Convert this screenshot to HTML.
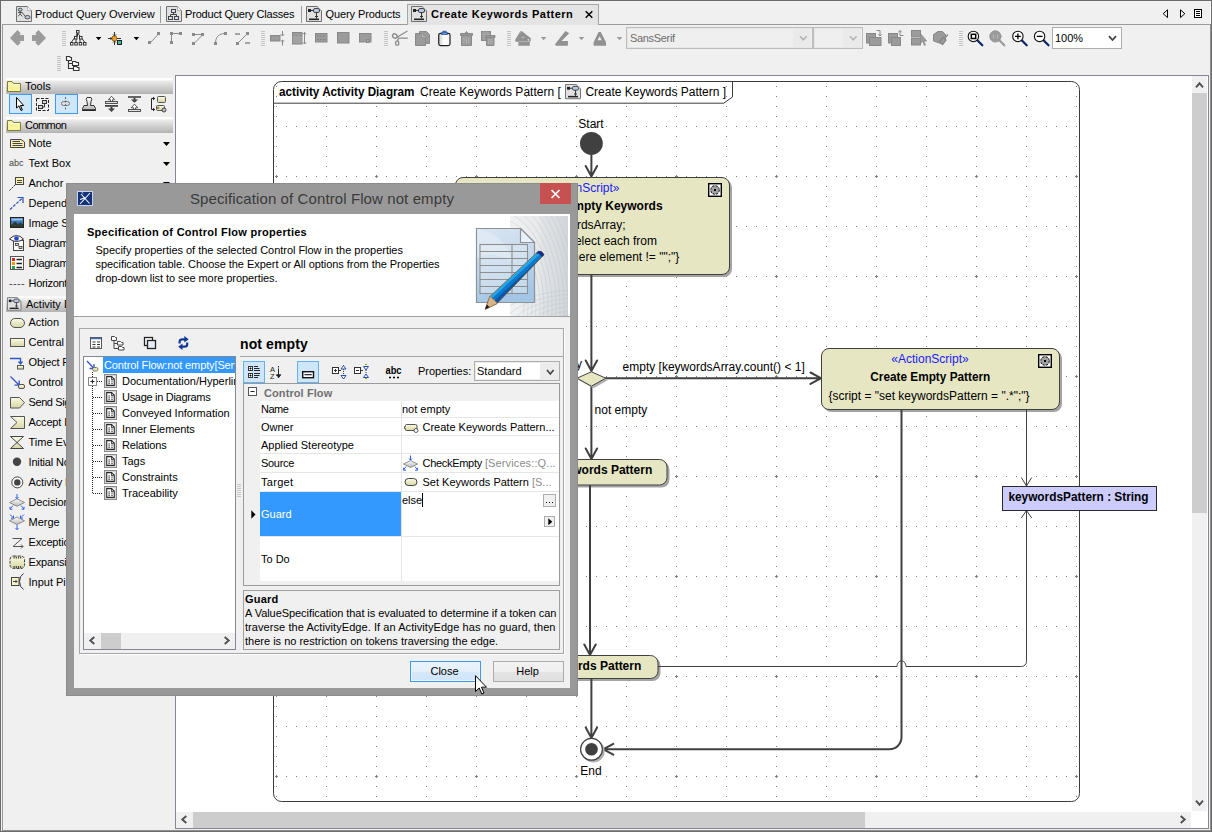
<!DOCTYPE html>
<html lang="en">
<head>
<meta charset="utf-8">
<title>Create Keywords Pattern</title>
<style>
*{box-sizing:border-box;margin:0;padding:0}
html,body{width:1212px;height:832px;overflow:hidden;background:#f0f0f0}
body{position:relative;font-family:"Liberation Sans",sans-serif;font-size:11px;color:#000;line-height:14px}
.a{position:absolute}
.t{position:absolute;white-space:nowrap;line-height:14px;height:14px}
.b{font-weight:bold;letter-spacing:.45px}
svg{position:absolute;overflow:visible}
.grip{position:absolute;width:4px;height:16px;background:repeating-linear-gradient(to bottom,#c4c4c4 0,#c4c4c4 1px,transparent 1px,transparent 2px)}
.dd{position:absolute;width:0;height:0;border-left:3.5px solid transparent;border-right:3.5px solid transparent;border-top:4px solid #000}
.ddg{border-top-color:#9a9a9a}
.ph{position:absolute;left:6px;width:167px;height:16px;background:linear-gradient(to bottom,#fff 0,#fff 10%,#ebebeb 19%,#dcdcdc 40%,#cacaca 66%,#b3b3b3 100%)}
.pi{position:absolute;left:28.500px;white-space:nowrap;line-height:14px}
.tb{position:absolute;width:23px;height:20px;background:#cde6f9;border:1px solid #3d99f5}
</style>
</head>
<body>
<!-- window edge -->
<div class="a" style="left:0;top:0;width:1212px;height:1px;background:#6c6c6c"></div>
<div class="a" style="left:0;top:0;width:1px;height:832px;background:#6c6c6c"></div>
<div class="a" style="left:1211px;top:0;width:1px;height:832px;background:#6c6c6c"></div>
<div class="a" style="left:1210px;top:24px;width:1px;height:808px;background:#8e8e8e"></div>
<div class="a" style="left:1210px;top:1px;width:1px;height:23px;background:#fafafa"></div>
<div class="a" style="left:0;top:831px;width:1212px;height:1px;background:#6c6c6c"></div>
<div class="a" style="left:2px;top:830px;width:1209px;height:1px;background:#8e8e8e"></div>
<div class="a" style="left:2px;top:24px;width:1px;height:806px;background:#9a9a9a"></div>
<!-- tab bar -->
<div class="a" style="left:2px;top:24px;width:405px;height:1px;background:#9a9a9a"></div>
<div class="a" style="left:598px;top:24px;width:612px;height:1px;background:#9a9a9a"></div>
<div class="a" style="left:407px;top:4px;width:192px;height:21px;background:#e4e4e4;border:1px solid #a5a5a5;border-bottom:none"></div>
<div class="a" style="left:160px;top:6px;width:1px;height:17px;background:#9a9a9a"></div>
<div class="a" style="left:301px;top:6px;width:1px;height:17px;background:#9a9a9a"></div>
<svg width="0" height="0" style="left:0;top:0">
<defs>
<g id="doc"><path d="M.5 .5H11.5L15.5 4.5V15.5H.5Z" fill="#e1e1e1" stroke="#707070"/><path d="M11.5 .5V4.5H15.5Z" fill="#fff" stroke="none"/><path d="M11.5 1V4.5H15" fill="none" stroke="#8a8a8a" stroke-width=".6"/></g>
<g id="actdoc"><use href="#doc"/><rect x="2" y="3" width="3" height="3" fill="#222"/><path d="M5 4.5H8" stroke="#333" fill="none"/><rect x="7.5" y="2.5" width="6" height="4" rx="1.5" fill="#b9c8e6" stroke="#444"/><path d="M10.5 6.5V12.5M9 10.5H12" stroke="#333" fill="none"/><rect x="3" y="12.5" width="10" height="1.6" fill="#222"/></g>
</defs>
</svg>
<svg class="a" style="left:16px;top:6px" width="16" height="16" viewBox="0 0 16 16"><use href="#doc"/><ellipse cx="4.2" cy="3.7" rx="2" ry="1.5" fill="#b9c8e6" stroke="#444" stroke-width=".9"/><path d="M4.2 5.2V8M2 6.5H6.5M4.2 8L2.2 10.3M4.2 8L6.2 10.3M6 6.5L10 11" stroke="#444" stroke-width=".9" fill="none"/><ellipse cx="11.5" cy="11.2" rx="2.6" ry="1.7" fill="#b9c8e6" stroke="#444" stroke-width=".9"/></svg>
<div class="t" style="left:35px;top:7px">Product Query Overview</div>
<svg class="a" style="left:166px;top:6px" width="16" height="16" viewBox="0 0 16 16"><use href="#doc"/><rect x="5.5" y="3.5" width="4" height="3" fill="#d6e0f5" stroke="#444"/><rect x="2.5" y="10.5" width="4" height="3" fill="#d6e0f5" stroke="#444"/><rect x="8.5" y="10.5" width="4" height="3" fill="#d6e0f5" stroke="#444"/><path d="M7.5 6.5V8.5M4.5 10.5V8.5H10.5V10.5" stroke="#444" fill="none"/></svg>
<div class="t" style="left:185px;top:7px;letter-spacing:-.18px">Product Query Classes</div>
<svg class="a" style="left:306px;top:6px" width="16" height="16" viewBox="0 0 16 16"><use href="#actdoc"/></svg>
<div class="t" style="left:325.500px;top:7px;letter-spacing:-.1px">Query Products</div>
<svg class="a" style="left:411px;top:6px" width="16" height="16" viewBox="0 0 16 16"><use href="#actdoc"/></svg>
<div class="t b" style="left:431px;top:7px;letter-spacing:.5px">Create Keywords Pattern</div>
<svg class="a" style="left:585px;top:11px" width="8" height="7" viewBox="0 0 8 7"><path d="M.7 .3L7.3 6.7M7.3 .3L.7 6.7" stroke="#000" stroke-width="1.5" fill="none"/></svg>
<!-- tab nav -->
<svg class="a" style="left:1162px;top:9px" width="42" height="10" viewBox="0 0 42 10"><path d="M5.5 .8L1.2 4.7L5.5 8.6Z" fill="none" stroke="#000" stroke-width="1"/><path d="M18.5 .8L22.8 4.7L18.5 8.6Z" fill="none" stroke="#000" stroke-width="1"/><rect x="32.5" y=".5" width="7" height="8" fill="#fff" stroke="#000"/><path d="M34 2.5H38M34 4.5H38M34 6.5H38" stroke="#000" fill="none"/></svg>
<!-- toolbar -->
<div class="grip" style="left:62px;top:31px"></div>
<div class="grip" style="left:261px;top:31px"></div>
<div class="grip" style="left:384px;top:31px"></div>
<div class="grip" style="left:507px;top:31px"></div>
<div class="grip" style="left:959px;top:31px"></div>
<div class="grip" style="left:57px;top:56px"></div>
<svg class="a" style="left:0;top:0" width="1212" height="76" viewBox="0 0 1212 76">
<g fill="#9b9b9b" stroke="none">
<path d="M10 38L17.5 30L20.8 33.6L19.4 35H24V41H19.4L20.8 42.4L17.5 45.8Z"/>
<path d="M46 38L38.5 30L35.2 33.6L36.6 35H32V41H36.6L35.2 42.4L38.5 45.8Z"/>
</g>
<!-- tree icon -->
<g fill="#fff" stroke="#333" stroke-width="1">
<path d="M77.5 33V36.5M75.5 36.5L71.5 42M76 39V42M80 39V42M80.5 36.5L84.5 42M76 36L77.5 33L80 36" fill="none"/>
<rect x="76.5" y="30.5" width="2.5" height="2.5"/><rect x="74.5" y="36.5" width="2.5" height="2.5"/><rect x="79.5" y="36.5" width="2.5" height="2.5"/>
<rect x="70.5" y="42.5" width="2.5" height="2.5"/><rect x="74.8" y="42.5" width="2.5" height="2.5"/><rect x="79.2" y="42.5" width="2.5" height="2.5"/><rect x="83.5" y="42.5" width="2.5" height="2.5"/>
</g>
<path d="M95.8 37H101.4L98.6 40.2Z" fill="#000"/>
<!-- layout icon -->
<g stroke="#333" stroke-width="1" fill="none">
<path d="M108 38.5H112M110.5 37L112 38.5L110.5 40M114.5 32V36M113 34.5L114.5 36L116 34.5M114.5 45V41M113 42.5L114.5 41L116 42.5M117 38.5H121"/>
<rect x="112.5" y="36.5" width="4" height="4" fill="#f0a030" stroke="#c07818"/>
<rect x="117.5" y="40.5" width="4" height="4" fill="#30c0a0" stroke="#222"/>
</g>
<path d="M133.6 37H139.2L136.4 40.2Z" fill="#000"/>
<!-- path style icons -->
<g fill="#8a8a8a" stroke="#8a8a8a" stroke-width="1">
<rect x="148.5" y="41.5" width="2" height="2"/><rect x="157.5" y="32.5" width="2" height="2"/><path d="M150 43L159 33.5" fill="none"/>
<rect x="170.5" y="32.5" width="2" height="2"/><rect x="179.5" y="32.5" width="2" height="2"/><rect x="170.5" y="41.5" width="2" height="2"/><path d="M171.5 42V33.5H181" fill="none"/>
<rect x="192.5" y="33.5" width="2" height="2"/><rect x="201.5" y="33.5" width="2" height="2"/><rect x="192.5" y="42.5" width="2" height="2"/><path d="M193 34.5H203L193.5 44" fill="none"/>
<rect x="214.500" y="42.500" width="2" height="2"/><rect x="224.5" y="32.500" width="2" height="2"/><path d="M215.500 43C215.500 37 219 33.500 225 33.500" fill="none"/>
<rect x="236.500" y="42.500" width="2" height="2"/><rect x="246.500" y="32.500" width="2" height="2"/><path d="M237.500 43.500L248 33" fill="none"/><path d="M235 34H240M245 43H250" fill="none" stroke-width="1.6"/>
</g>
<!-- size icons -->
<g fill="#9b9b9b" stroke="#888" stroke-width="1">
<rect x="270.500" y="35.500" width="9.500" height="5.500"/><path d="M282.500 31V36M280.800 34.300L282.500 36L284.200 34.300M282.500 45.500V40M280.800 41.700L282.500 40L284.200 41.700" fill="none"/>
<rect x="292.500" y="32.500" width="9.500" height="11.500"/><path d="M292.500 37.500H302M292.500 40H302M292.500 42.200H302" stroke="#aaa" fill="none"/><path d="M304.500 32.500V44M302.800 34.300L304.500 32.500L306.200 34.300M302.800 42.300L304.500 44L306.200 42.300" fill="none"/>
<rect x="315.500" y="33.500" width="11.500" height="8.500"/><path d="M317 36H325M317 39.500H325" stroke="#858585" stroke-dasharray="2 1" fill="none"/>
<rect x="337.500" y="32.500" width="11.500" height="10.500"/>
<rect x="359.500" y="33.500" width="11.500" height="8.500"/><rect x="366.500" y="39.500" width="2.500" height="3" fill="#aaa"/>
</g>
<!-- edit icons -->
<g fill="none" stroke="#8a8a8a" stroke-width="1.300">
<ellipse cx="394.800" cy="36" rx="2.400" ry="2" transform="rotate(35 394.800 36)"/><rect x="395.700" y="41.200" width="3" height="4" rx="1"/><path d="M396.500 37.500L407.500 31M397.500 41L398.500 38.200H407.800"/>
</g>
<g fill="#9b9b9b" stroke="#8a8a8a" stroke-width="1">
<path d="M419.500 31.500H426.500L429.500 34.500V43.500H419.500Z"/><path d="M415.500 33.500H422.500L425.500 36.500V45.500H415.500Z"/><path d="M422.500 33.500V36.500H425.500" fill="none" stroke="#b5b5b5"/>
<path d="M461.500 35.500H471.500V45.500H461.500Z M460.500 33.500H472.500V35.500H460.500Z M465 33.500L466.500 31.500L468 33.500"/><path d="M464 37.500V43.500M466.500 37.500V43.500M469 37.500V43.500" stroke="#b0b0b0" fill="none"/>
<rect x="481.500" y="31.500" width="9" height="9"/><path d="M484 31.500V40M487 31.500V40M481.500 34.500H490" stroke="#a8a8a8" fill="none"/>
<path d="M486.500 37.500H494V45.500H486.500Z M485.500 35.500H495V37.500H485.500Z"/><path d="M488.500 39V44M490.300 39V44M492 39V44" stroke="#b0b0b0" fill="none"/>
</g>
<!-- paste -->
<defs><linearGradient id="pg" x1="0" x2="1" y1="0" y2="0"><stop offset="0" stop-color="#c8c8c8"/><stop offset=".45" stop-color="#fff"/><stop offset="1" stop-color="#f4f4f4"/></linearGradient></defs>
<rect x="438.700" y="33.300" width="11.300" height="12.300" rx="1.800" fill="url(#pg)" stroke="#222" stroke-width="1.200"/>
<path d="M441.500 34.500V32.800L443.200 31.200H445.800L447.500 32.800V34.500Z" fill="#2a5db8" stroke="#1a3f8c" stroke-width=".6"/><path d="M442.300 33.300H446.700" stroke="#8fb2f0" stroke-width=".8"/>
<!-- fill / pen / font colour -->
<g fill="#919191" stroke="none">
<path d="M515 40L520.300 31.200H522L530.800 38.200V41.200H529.800V45.800H518.400V41.800H515.800Z"/>
<path d="M555 44.300L565.400 31L569.200 33.200L561.600 40.900H567.900V45.800H555.800Z"/>
<path d="M598.600 32H600.800L606 42.200V45.800H593.600V42.200Z"/>
</g>
<path d="M519 41.500H529.500" stroke="#b4b4b4" stroke-width=".9" fill="none"/><path d="M521.200 32.300C520 31.400 519.200 32.600 519.700 33.600" stroke="#bbb" stroke-width=".8" fill="none"/><path d="M521 37.500L523 36L525 37.500L523 39Z" fill="#aaa"/><circle cx="528.500" cy="39.800" r=".9" fill="#ddd"/>
<path d="M597.600 40.200H601.600L599.600 36.200Z" fill="#f0f0f0"/>
<g fill="#9a9a9a"><path d="M540.800 37H546.400L543.600 40.200Z"/><path d="M578.700 37H584.300L581.500 40.200Z"/><path d="M616.700 37H622.300L619.500 40.200Z"/></g>
<!-- order icons -->
<g fill="#9b9b9b" stroke="#888" stroke-width="1">
<rect x="866.500" y="33.500" width="9" height="9.500"/><rect x="869.500" y="37.500" width="11.500" height="8"/><path d="M876.500 30.500H880V36M878.300 34.300L880 36L881.700 34.300" fill="none"/>
<rect x="888.500" y="33.500" width="9" height="9.500"/><rect x="891.500" y="37.500" width="9" height="8"/><path d="M903.500 35.500H900V30.500M898.300 32.200L900 30.500L901.700 32.200" fill="none"/>
<rect x="911.500" y="30.500" width="9" height="6.500"/><rect x="911.500" y="38.500" width="9" height="6.500"/><path d="M920.500 33.500V43.500L922.700 41.600L924.300 45.500L925.500 45L924 41.300L926.800 41Z" stroke-width=".6"/>
<path d="M933.500 34.500L938 31.500H942.500L945.500 34.500V40L941 43.500L933.500 41Z"/><path d="M939.500 41.500L943 37.500L946 40L942.500 44.500Z M944.500 38.500L948 34.500" stroke-width="1.300"/>
</g>
<!-- zoom icons -->
<g stroke-linecap="round">
<path d="M977.300 40.300L982.300 45.300" stroke="#0a246a" stroke-width="2.200"/><circle cx="973.400" cy="36.400" r="5.200" fill="#fff" stroke="#111" stroke-width="1.100"/><rect x="971.300" y="34.300" width="4.400" height="4.200" fill="#fff" stroke="#000" stroke-width="1.500"/>
<path d="M999.300 40.300L1004.300 45.300" stroke="#9a9a9a" stroke-width="2.200"/><circle cx="995.400" cy="36.400" r="5.600" fill="#9b9b9b" stroke="#909090" stroke-width="1"/><path d="M993.300 34.500V38.700M997.700 34.500V38.700M995.500 35.500V36M995.500 37.500V38" stroke="#b8b8b8" stroke-width="1" stroke-linecap="butt"/>
<path d="M1021.700 40.300L1026.700 45.300" stroke="#0a246a" stroke-width="2.200"/><circle cx="1017.900" cy="36.400" r="5.200" fill="#fff" stroke="#111" stroke-width="1.100"/><path d="M1015 36.400H1020.800M1017.900 33.500V39.300" stroke="#000" stroke-width="1.300" stroke-linecap="butt"/>
<path d="M1043.500 40.300L1048.500 45.300" stroke="#0a246a" stroke-width="2.200"/><circle cx="1039.600" cy="36.400" r="5.200" fill="#fff" stroke="#111" stroke-width="1.100"/><path d="M1036.700 36.400H1042.500" stroke="#000" stroke-width="1.300" stroke-linecap="butt"/>
</g>
<!-- row 2 icon -->
<g fill="#fff" stroke="#333" stroke-width="1.100">
<path d="M68.500 60.500V68.500H73M68.500 63.500H72" fill="none"/>
<path d="M66.500 60.500V56.500H69.500L70.500 57.500H71.500V60.500Z"/><path d="M72.500 65.500V61.500H75.500L76.500 62.500H78.500V65.500Z"/><path d="M73.500 70.500V66.500H76.500L77.500 67.500H79V70.500Z"/>
</g>
</svg>
<!-- combos -->
<div class="a" style="left:626px;top:27px;width:187px;height:22px;border:1px solid #bdbdbd;background:#efefef"></div>
<div class="a" style="left:627px;top:28px;width:185px;height:20px;border:1px solid #e6e6e6;border-right:none"></div>
<div class="a" style="left:793px;top:29px;width:18px;height:18px;background:#eaeaea"></div>
<div class="t" style="left:630px;top:31px;color:#6d6d6d;letter-spacing:-.32px">SansSerif</div>
<svg class="a" style="left:799px;top:35px" width="9" height="7" viewBox="0 0 9 7"><path d="M1 1.200L4.300 4.800L7.600 1.200" fill="none" stroke="#b3b3b3" stroke-width="1.600"/></svg>
<div class="a" style="left:813px;top:27px;width:50px;height:22px;border:1px solid #bdbdbd;background:#efefef"></div>
<div class="a" style="left:814px;top:28px;width:48px;height:20px;border:1px solid #e6e6e6;border-right:none"></div>
<div class="a" style="left:843px;top:29px;width:18px;height:18px;background:#eaeaea"></div>
<svg class="a" style="left:849px;top:35px" width="9" height="7" viewBox="0 0 9 7"><path d="M1 1.200L4.300 4.800L7.600 1.200" fill="none" stroke="#b3b3b3" stroke-width="1.600"/></svg>
<div class="a" style="left:1052px;top:27px;width:70px;height:22px;border:1px solid #adadad;background:#fff"></div>
<div class="t" style="left:1055px;top:31px">100%</div>
<svg class="a" style="left:1108px;top:35px" width="9" height="7" viewBox="0 0 9 7"><path d="M1 1.200L4.500 5L8 1.200" fill="none" stroke="#444" stroke-width="1.800"/></svg>
<!-- palette -->
<div class="ph" style="top:78px"></div>
<div class="ph" style="top:117px"></div>
<div class="ph" style="top:296px"></div>
<svg class="a" style="left:0;top:76px" width="176" height="530" viewBox="0 76 176 530">
<defs>
<linearGradient id="yg" x1="0" x2="0" y1="0" y2="1"><stop offset="0" stop-color="#fbfbe4"/><stop offset="1" stop-color="#d6d6a4"/></linearGradient>
<linearGradient id="gg" x1="0" x2="0" y1="0" y2="1"><stop offset="0" stop-color="#fff"/><stop offset="1" stop-color="#b4b4b4"/></linearGradient>
<g id="fold"><path d="M.5 10.500V.5H5L6.500 2.500H13.500V10.500Z" fill="#f7f39c" stroke="#7f7f3a"/><path d="M1.500 3.500H12.500" stroke="#fffde0" fill="none"/></g>
</defs>
<use href="#fold" x="7" y="81"/><use href="#fold" x="7" y="120"/>
<!-- tools row -->
<rect x="9.500" y="94.500" width="22" height="19" fill="#cde6f9" stroke="#3d99f5"/>
<rect x="55.500" y="94.500" width="22" height="19" fill="#cde6f9" stroke="#3d99f5"/>
<path d="M16.500 97.500V108L19 105.800L21 110.500L22.300 110L20.500 105.500H23.700Z" fill="#fff" stroke="#000" stroke-width="1"/>
<rect x="36.500" y="98.500" width="12" height="12" fill="none" stroke="#222" stroke-dasharray="3 1.500"/><rect x="42.500" y="100.500" width="4" height="3" fill="#d8d8d8" stroke="#333"/><rect x="38.500" y="105.500" width="4" height="3" fill="#d8d8d8" stroke="#333"/><path d="M44.500 103.500V107H42.500" fill="none" stroke="#333"/>
<rect x="61.500" y="101.500" width="8" height="4" rx="2" fill="#e0e0e0" stroke="#777"/><path d="M65.500 97V111" stroke="#666" stroke-dasharray="2 1.500" fill="none"/>
<path d="M87 97.500H91Q92.500 99 91 101.500L90.500 105.500H94L95.500 108.500V110.500H82.500V108.500L84 105.500H87.500L87 101.500Q85.500 99 87 97.500Z" fill="url(#gg)" stroke="#333" stroke-width="1"/><path d="M82.500 110H95.500" stroke="#222" stroke-width="1.500"/>
<g stroke="#444" stroke-width=".9">
<path d="M111.500 96.300L114.600 99.700H112.500V101.500H110.500V99.700H108.400Z" fill="#fff"/>
<rect x="105.500" y="101.500" width="12" height="2" fill="#e0e0e0"/>
<rect x="105" y="105" width="13" height="1.800" fill="#444" stroke="none"/>
<path d="M110.500 106.800H112.500V108.600H115L111.500 112L108 108.600H110.500Z" fill="#444" stroke="none"/>
<rect x="128" y="96.200" width="13" height="1.600" fill="#444" stroke="none"/>
<path d="M133.500 97.800H135.500V99.500H138.200L134.500 102.700L130.800 99.500H133.500Z" fill="#444" stroke="none"/>
<path d="M134.500 104.200L137.800 107.800H135.500V109.300H133.500V107.800H131.200Z" fill="#fff"/>
<rect x="128.500" y="109.500" width="12" height="2" fill="#e0e0e0"/>
</g>
<path d="M154.500 98.500H151.500V109.500H154.500M153 97L154.700 98.500L153 100M153 108L154.700 109.500L153 111" fill="none" stroke="#222"/>
<rect x="157.500" y="96.500" width="8" height="6" rx="1" fill="url(#yg)" stroke="#555"/><rect x="156.500" y="105.500" width="8" height="5" rx="1" fill="url(#yg)" stroke="#555"/><rect x="157" y="107" width="2" height="1.500" fill="#c8b850" stroke="#555" stroke-width=".5"/><circle cx="164" cy="110" r="2" fill="#fff" stroke="#333"/><circle cx="164" cy="110" r=".7" fill="#555"/>
<!-- common -->
<path d="M10.500 139.500H21L24.500 142V147.500H10.500Z" fill="#f7f2b6" stroke="#444"/><path d="M12.500 141.500H20M12.500 143.500H22.500M12.500 145.500H22.500" stroke="#444" fill="none"/>
<path d="M163 142H170L166.500 146Z M163 162H170L166.500 166Z M163 182H170L166.500 186Z" fill="#000"/>
<rect x="15.500" y="177.500" width="8" height="7" fill="#f7f2b6" stroke="#444"/><path d="M17 180.500H22M17 182.500H22" stroke="#444" fill="none"/><path d="M9.500 190.500L15 185" stroke="#333" stroke-dasharray="2 1" fill="none"/>
<path d="M10 209.500L22.500 198" stroke="#2b4fc0" stroke-width="1.200" stroke-dasharray="3 1.300" fill="none"/><path d="M17.500 197.500H23V203" stroke="#2b4fc0" stroke-width="1.200" fill="none"/>
<rect x="10.500" y="217.500" width="13" height="10" fill="#3c76b8" stroke="#222"/><path d="M11 225L15 221.500L18 224L20.500 222.500L23 224.500V227H11Z" fill="#2e3e30"/><path d="M11.500 218.500H22.500V220.500H11.500Z" fill="#9cc4ea"/>
<rect x="13.500" y="240.500" width="10" height="10" fill="#fff" stroke="#444"/><rect x="15.500" y="243.500" width="3" height="2" fill="#ddd" stroke="#333" stroke-width=".8"/><rect x="19" y="246.500" width="3" height="2" fill="#ddd" stroke="#333" stroke-width=".8"/>
<path d="M9.500 239Q16.500 232 23.500 239Q16.500 244 9.500 239Z" fill="#fff" stroke="#333"/><circle cx="16.500" cy="238.500" r="2.300" fill="#2244cc"/>
<rect x="10.500" y="256.500" width="13" height="13" fill="#fff" stroke="#555"/><rect x="12" y="258" width="3" height="3" fill="#d22"/><rect x="12" y="262" width="3" height="3" fill="#f90"/><rect x="12" y="266" width="3" height="3" fill="#2a4"/><path d="M16.500 259.500H22M16.500 263.500H22M16.500 267.500H22" stroke="#222" fill="none" stroke-width="1.300"/>
<!-- activity -->
<g transform="translate(7 297) scale(.9 .85)"><use href="#actdoc"/></g>
<rect x="10.500" y="318.500" width="14" height="9" rx="4.500" fill="url(#yg)" stroke="#555"/>
<rect x="10.500" y="338.500" width="14" height="8" fill="url(#yg)" stroke="#555"/>
<path d="M10 358.500H20.500V364M18.500 361.500L20.500 364L22.500 361.500" fill="none" stroke="#3355cc" stroke-width="1.300"/><rect x="17.500" y="365.500" width="6" height="3.500" fill="url(#yg)" stroke="#555"/>
<path d="M10.500 376.500L19 385M19.200 380.500V385.200H14.500" fill="none" stroke="#3355cc" stroke-width="1.300"/><rect x="18.500" y="384.500" width="6" height="4" rx="1.500" fill="url(#yg)" stroke="#555"/>
<path d="M10.500 397.500H19.500L24.500 402.700L19.500 408H10.500Z" fill="url(#yg)" stroke="#555"/>
<path d="M10.500 416.500H24.500V428.500H10.500L17 422.500Z" fill="url(#yg)" stroke="#555"/>
<path d="M10.500 436.500H23.500L10.500 448.500H23.500Z" fill="url(#yg)" stroke="#444"/>
<circle cx="17" cy="461.800" r="4.200" fill="#444"/>
<circle cx="17.300" cy="482.400" r="5.500" fill="#fff" stroke="#444"/><circle cx="17.300" cy="482.400" r="3.200" fill="#444"/>
<path d="M9.500 502.500L17 498.800L24.500 502.500L17 506.300Z" fill="url(#gg)" stroke="#777" stroke-width=".8"/><path d="M17 494V498.500M15.500 497L17 498.700L18.500 497M13 505.500L10 509M10 506.800V509.200H12.500M21 505.500L24 509M24 506.800V509.200H21.500" fill="none" stroke="#3366ee" stroke-width="1"/>
<path d="M9.500 520.800L17 517L24.500 520.800L17 524.600Z" fill="url(#gg)" stroke="#777" stroke-width=".8"/><path d="M10 514.500L13.500 518M13.500 515.500V518.200H11M24 514.500L20.500 518M20.500 515.500V518.200H23M17 525V529.500M15.500 528L17 529.700L18.500 528" fill="none" stroke="#3366ee" stroke-width="1"/>
<path d="M12.500 538.500H22L13 546.500H23M21 544.500L23 546.500L21 548.500" fill="none" stroke="#555" stroke-width="1"/>
<rect x="10" y="556" width="14.500" height="12.500" rx="3.500" fill="url(#yg)" stroke="#444" stroke-dasharray="3 1.200"/><path d="M13.500 557.500H21.500M13.500 567H21.500" stroke="#444" stroke-width="2" stroke-dasharray="1.200 1" fill="none"/>
<rect x="11.500" y="577.500" width="7.500" height="8" fill="#f7f2c8" stroke="#444"/><path d="M13 581.500H17M15.500 580L17 581.500L15.500 583" fill="none" stroke="#333" stroke-width=".9"/><path d="M23.500 573.500Q19.500 576 19.500 581.500Q19.500 587 23.500 589.500" fill="none" stroke="#333"/>
</svg>
<div class="pi" style="left:25px;top:79px">Tools</div>
<div class="pi" style="left:25px;top:118px;letter-spacing:-.55px">Common</div>
<div class="pi" style="top:136px">Note</div>
<div class="pi" style="left:9px;top:156px;font-size:9px;color:#444">abc</div>
<div class="pi" style="top:156px">Text Box</div>
<div class="pi" style="top:176px">Anchor</div>
<div class="pi" style="top:196px">Dependency</div>
<div class="pi" style="top:216px;letter-spacing:-.15px">Image Shape</div>
<div class="pi" style="top:236px;letter-spacing:-.25px">Diagram Overview</div>
<div class="pi" style="top:256px;letter-spacing:-.25px">Diagram Legend</div>
<div class="pi" style="left:9px;top:276px;color:#444;letter-spacing:.3px">----</div>
<div class="pi" style="top:276px;letter-spacing:-.3px">Horizontal Separator</div>
<div class="pi" style="left:26px;top:297px">Activity Diagram</div>
<div class="pi" style="top:315px">Action</div>
<div class="pi" style="top:335px">Central Buffer Node</div>
<div class="pi" style="top:355px;letter-spacing:-.15px">Object Flow</div>
<div class="pi" style="top:375px;letter-spacing:-.15px">Control Flow</div>
<div class="pi" style="top:395px;letter-spacing:-.4px">Send Signal Action</div>
<div class="pi" style="top:415px;letter-spacing:-.15px">Accept Event Action</div>
<div class="pi" style="top:435px">Time Event</div>
<div class="pi" style="top:455px;letter-spacing:-.15px">Initial Node</div>
<div class="pi" style="top:475px;letter-spacing:-.15px">Activity Final</div>
<div class="pi" style="top:495px;letter-spacing:-.15px">Decision</div>
<div class="pi" style="top:515px">Merge</div>
<div class="pi" style="top:535px;letter-spacing:-.15px">Exception Handler</div>
<div class="pi" style="top:555px;letter-spacing:-.15px">Expansion Region</div>
<div class="pi" style="top:575px">Input Pin</div>
<!-- canvas -->
<div class="a" style="left:175px;top:75px;width:1034px;height:754px;border:1px solid #828790;background:#fff"></div>
<svg class="a" style="left:176px;top:76px;overflow:hidden" width="1016" height="736" viewBox="176 76 1016 736" font-family="'Liberation Sans',sans-serif" font-size="12">
<defs>
<pattern id="grid" x="200" y="100" width="100" height="100" patternUnits="userSpaceOnUse"><path d="M6 26h1v1h-1zM16 26h1v1h-1zM26 26h1v1h-1zM36 26h1v1h-1zM46 26h1v1h-1zM56 26h1v1h-1zM66 26h1v1h-1zM76 26h1v1h-1zM86 26h1v1h-1zM96 26h1v1h-1zM6 76h1v1h-1zM16 76h1v1h-1zM26 76h1v1h-1zM36 76h1v1h-1zM46 76h1v1h-1zM56 76h1v1h-1zM66 76h1v1h-1zM76 76h1v1h-1zM86 76h1v1h-1zM96 76h1v1h-1zM26 6h1v1h-1zM26 16h1v1h-1zM26 36h1v1h-1zM26 46h1v1h-1zM26 56h1v1h-1zM26 66h1v1h-1zM26 86h1v1h-1zM26 96h1v1h-1zM76 6h1v1h-1zM76 16h1v1h-1zM76 36h1v1h-1zM76 46h1v1h-1zM76 56h1v1h-1zM76 66h1v1h-1zM76 86h1v1h-1zM76 96h1v1h-1zM75 76h1v1h-1zM77 76h1v1h-1zM76 75h1v1h-1zM76 77h1v1h-1z" fill="#808080"/></pattern>
<linearGradient id="kh" x1="0" x2="0" y1="0" y2="1"><stop offset="0" stop-color="#e6e4c2"/><stop offset="1" stop-color="#e2e0bc"/></linearGradient>
<g id="gear"><rect x=".5" y=".5" width="14" height="14" fill="#777" stroke="none"/><rect x="1.200" y="1.200" width="12.600" height="12.600" fill="#fff" stroke="#000" stroke-width="1.400"/><circle cx="7.500" cy="7.500" r="4.200" fill="#a2a2a2" stroke="#111" stroke-width="1.100" stroke-dasharray="2.300 1"/><circle cx="7.500" cy="7.500" r="3.600" fill="#a2a2a2"/><rect x="6.500" y="6.500" width="2" height="2" fill="#000"/></g>
</defs>
<path d="M273.500 793.500V89.500A8 8 0 0 1 281.500 81.500H1071.500A8 8 0 0 1 1079.500 89.500V793.500A8 8 0 0 1 1071.500 801.500H281.500A8 8 0 0 1 273.500 793.500Z" fill="#fff"/>
<path d="M273.500 793.500V89.500A8 8 0 0 1 281.500 81.500H1071.500A8 8 0 0 1 1079.500 89.500V793.500A8 8 0 0 1 1071.500 801.500H281.500A8 8 0 0 1 273.500 793.500Z" fill="url(#grid)" stroke="#3c3c3c" stroke-width="1"/>
<path d="M273.500 103.200H723.700L732.500 97V81.500" fill="none" stroke="#3c3c3c"/>
<text x="279" y="96" font-weight="bold" textLength="135.500" lengthAdjust="spacingAndGlyphs">activity Activity Diagram</text>
<text x="420" y="96">Create Keywords Pattern [</text>
<g transform="translate(565 84) scale(1 .95)"><use href="#actdoc"/></g>
<text x="585.400" y="96">Create Keywords Pattern ]</text>
<!-- shadows -->
<g fill="#a4a4a4">
<rect x="457.500" y="179.500" width="274.500" height="97.500" rx="8"/>
<rect x="823.500" y="350.500" width="238.500" height="61.500" rx="8"/>
<rect x="518" y="461.500" width="151.500" height="26" rx="8"/>
<rect x="526" y="657.500" width="134.500" height="23.500" rx="8"/>
</g>
<!-- edges -->
<g fill="none" stroke="#404040" stroke-width="2" stroke-linecap="round">
<path d="M591.400 154V176.500M585.700 166L591.400 176.500L597.100 166"/>
<path d="M591.400 275V371M585.700 360.500L591.400 371L597.100 360.500"/>
<path d="M606 378.200H820.500M810.500 372.500L821 378.200L810.500 383.900"/>
<path d="M591.400 386V458.500M585.700 448.500L591.400 459L597.100 448.500"/>
<path d="M590 485V654.500M584.300 644.500L590 655L595.700 644.500"/>
<path d="M591.400 679V737.500M585.700 727.500L591.400 738L597.100 727.500"/>
<path d="M901.500 409.500V737.300A12 12 0 0 1 889.500 749.300H603.500M613.300 743.900L603.200 749.300L613.300 754.700"/>
</g>
<g fill="none" stroke="#404040" stroke-width="1">
<path d="M1026.500 409.500V485.500M1021.300 477.500L1026.500 486L1031.700 477.500"/>
<path d="M658 666.500H897A4.500 5.700 0 0 1 906 666.500H1021.500A5 5 0 0 0 1026.500 661.500V511M1021.300 518L1026.500 510.500L1031.700 518"/>
</g>
<!-- nodes -->
<circle cx="591.400" cy="143.400" r="11.400" fill="#404040"/>
<text x="591" y="128" text-anchor="middle">Start</text>
<rect x="455.500" y="177.500" width="274" height="97" rx="7.500" fill="#e6e6c3" stroke="#404040"/>
<use href="#gear" x="707.500" y="182.500"/>
<text x="619.500" y="191.500" text-anchor="end" fill="#1a1aff">«ActionScript»</text>
<text x="662.600" y="210" text-anchor="end" font-weight="bold">Remove Empty Keywords</text>
<text x="625.600" y="229" text-anchor="end">{script = "get keywordsArray;</text>
<text x="657" y="245" text-anchor="end">set keywordsArray = select each from</text>
<text x="679.300" y="261" text-anchor="end">keywordsArray where element != "";"}</text>
<path d="M593.400 373.800L607.800 380.200L593.400 388.200L579 380.200Z" fill="#b2b2b2"/><path d="M591.400 371.800L605.800 378.200L591.400 386.200L577 378.200Z" fill="#e6e6c3" stroke="#404040"/>
<text x="582" y="368" text-anchor="end">CheckEmpty</text>
<text x="622.600" y="371">empty [keywordsArray.count() &lt; 1]</text>
<text x="594.600" y="414">not empty</text>
<rect x="516" y="459.500" width="151" height="25.500" rx="7.500" fill="#e6e6c3" stroke="#404040"/>
<text x="652.300" y="474" text-anchor="end" font-weight="bold">Set Keywords Pattern</text>
<rect x="524" y="655.500" width="134" height="23" rx="7.500" fill="#e6e6c3" stroke="#404040"/>
<text x="641.300" y="670" text-anchor="end" font-weight="bold">Keywords Pattern</text>
<rect x="821.500" y="348.500" width="238" height="61" rx="7.500" fill="#e6e6c3" stroke="#404040"/>
<use href="#gear" x="1037.500" y="353.500"/>
<text x="930" y="362.800" text-anchor="middle" fill="#1a1aff">«ActionScript»</text>
<text x="930.300" y="381" text-anchor="middle" font-weight="bold" textLength="120" lengthAdjust="spacingAndGlyphs">Create Empty Pattern</text>
<text x="828.400" y="399.700">{script = "set keywordsPattern = ".*";"}</text>
<rect x="1002.500" y="486.500" width="154" height="24" fill="#ccccff" stroke="#2a2a2a"/>
<text x="1008.400" y="501.300" font-weight="bold" textLength="140.200" lengthAdjust="spacingAndGlyphs">keywordsPattern : String</text>
<circle cx="593.400" cy="751.200" r="11.300" fill="#b2b2b2"/><circle cx="591.500" cy="749.300" r="10.900" fill="#fff" stroke="#404040" stroke-width="1.200"/>
<circle cx="591.500" cy="749.300" r="6.300" fill="#404040"/>
<text x="591" y="775" text-anchor="middle">End</text>
</svg>
<!-- scrollbars -->
<div class="a" style="left:1192px;top:76px;width:15px;height:735px;background:#f0f0f0"></div>
<div class="a" style="left:1192px;top:93px;width:15px;height:420px;background:#cdcdcd"></div>
<div class="a" style="left:176px;top:812px;width:1015px;height:16px;background:#f0f0f0"></div>
<div class="a" style="left:193px;top:812px;width:672px;height:16px;background:#cdcdcd"></div>
<svg class="a" style="left:1195px;top:81px" width="9" height="8" viewBox="0 0 9 8"><path d="M1 6.300L4.500 2.300L8 6.300" fill="none" stroke="#505050" stroke-width="1.900"/></svg>
<svg class="a" style="left:1195px;top:799px" width="9" height="8" viewBox="0 0 9 8"><path d="M1 1.700L4.500 5.700L8 1.700" fill="none" stroke="#505050" stroke-width="1.900"/></svg>
<svg class="a" style="left:180px;top:815px" width="8" height="9" viewBox="0 0 8 9"><path d="M6.300 1L2.300 4.500L6.300 8" fill="none" stroke="#505050" stroke-width="1.900"/></svg>
<svg class="a" style="left:1179px;top:815px" width="8" height="9" viewBox="0 0 8 9"><path d="M1.700 1L5.700 4.500L1.700 8" fill="none" stroke="#505050" stroke-width="1.900"/></svg>
<!-- dialog -->
<div class="a" style="left:66px;top:183px;width:512px;height:513px;background:#999;border:1px solid #8c8c8c"></div>
<div class="a" style="left:74px;top:214px;width:496px;height:474px;background:#f0f0f0"></div>
<svg class="a" style="left:77px;top:191px" width="16" height="15" viewBox="0 0 16 15"><rect x=".5" y=".5" width="15" height="14" fill="#12327a" stroke="#c8d4ee"/><path d="M3 13L13 2M4 3L12.500 12.500M3 8.500L9 6.500" stroke="#fff" stroke-width="1.100" fill="none"/><path d="M4.500 .5L6 2.500" stroke="#fff" stroke-width=".8"/></svg>
<div class="t" style="left:66px;top:189px;width:512px;text-align:center;font-size:15px;line-height:20px;height:20px;color:#3a3a3a;letter-spacing:.1px">Specification of Control Flow not empty</div>
<div class="a" style="left:540px;top:183px;width:31px;height:21px;background:#c75050"></div>
<svg class="a" style="left:550px;top:189px" width="11" height="10" viewBox="0 0 11 10"><path d="M1.500 1L9.500 9M9.500 1L1.500 9" stroke="#fff" stroke-width="1.700" fill="none"/></svg>
<!-- header -->
<div class="a" style="left:74px;top:214px;width:496px;height:103px;background:#fff;border-bottom:1px solid #a0a0a0"></div>
<svg class="a" style="left:470px;top:216px;overflow:hidden" width="98" height="100" viewBox="470 216 98 100">
<defs>
<linearGradient id="hbg" x1="0" x2="1" y1="0" y2="0"><stop offset="0" stop-color="#f2f2f2"/><stop offset=".5" stop-color="#e8e9ea"/><stop offset=".56" stop-color="#e1e3e5"/><stop offset=".8" stop-color="#dadde0"/><stop offset="1" stop-color="#d1d5d9"/></linearGradient>
<linearGradient id="dcg" x1="0" x2=".25" y1="0" y2="1"><stop offset="0" stop-color="#d9e5f1"/><stop offset=".55" stop-color="#c4d8ec"/><stop offset="1" stop-color="#a3c6e6"/></linearGradient>
<linearGradient id="pcl" gradientUnits="userSpaceOnUse" x1="512" y1="275" x2="518" y2="281.500"><stop offset="0" stop-color="#2fb4f2"/><stop offset=".4" stop-color="#1c9ce6"/><stop offset=".45" stop-color="#0b78cc"/><stop offset=".75" stop-color="#0b78cc"/><stop offset=".8" stop-color="#0a55a4"/><stop offset="1" stop-color="#0a55a4"/></linearGradient>
<clipPath id="hcl"><rect x="510" y="216" width="58" height="100"/></clipPath>
</defs>
<rect x="510" y="216" width="58" height="100" fill="url(#hbg)"/>
<g fill="none" stroke="#b4c3cd" stroke-width=".7" opacity=".55" clip-path="url(#hcl)"><ellipse cx="498" cy="306" rx="26" ry="45.5"/><ellipse cx="498" cy="306" rx="30" ry="52.5"/><ellipse cx="498" cy="306" rx="34" ry="59.5"/><ellipse cx="498" cy="306" rx="38" ry="66.5"/><ellipse cx="498" cy="306" rx="42" ry="73.5"/><ellipse cx="498" cy="306" rx="46" ry="80.5"/><ellipse cx="498" cy="306" rx="50" ry="87.5"/><ellipse cx="498" cy="306" rx="54" ry="94.5"/><ellipse cx="498" cy="306" rx="58" ry="101.5"/><ellipse cx="498" cy="306" rx="62" ry="108.5"/><ellipse cx="498" cy="306" rx="66" ry="115.5"/><ellipse cx="498" cy="306" rx="70" ry="122.5"/><ellipse cx="498" cy="306" rx="74" ry="129.5"/><ellipse cx="498" cy="306" rx="78" ry="136.5"/><ellipse cx="580" cy="330" rx="35.2" ry="16"/><ellipse cx="580" cy="330" rx="44.0" ry="20"/><ellipse cx="580" cy="330" rx="52.8" ry="24"/><ellipse cx="580" cy="330" rx="61.6" ry="28"/><ellipse cx="580" cy="330" rx="70.4" ry="32"/><ellipse cx="580" cy="330" rx="79.2" ry="36"/><ellipse cx="580" cy="330" rx="88.0" ry="40"/></g>
<path d="M476.500 228.500H520.500L534.500 242.500V302.500H476.500Z" fill="url(#dcg)" stroke="#8d9299" stroke-width="1.200"/>
<path d="M477 229Q505 232 512 262Q494 250 477 258Z" fill="#e6eef7" opacity=".55"/>
<path d="M520.500 228.500V242.500H534.500Z" fill="#e9f2fb" stroke="#8d9299" stroke-width="1.200" stroke-linejoin="round"/>
<g stroke="#8f8f8f" stroke-width="1.100" fill="none"><rect x="480" y="244.500" width="47.500" height="49" fill="#e4edf5" fill-opacity=".45"/><path d="M480 251.500H527.500M480 258.500H527.500M480 265.500H527.500M480 272.500H527.500M480 279.500H527.500M480 286.500H527.500M512 244.500V293.500"/></g>
<path d="M485.200 309.300L489.800 296.600L538.400 251.200Q541.800 250 544 254.800L497 303.600Z" fill="url(#pcl)" stroke="#7a4a1a" stroke-width=".7"/>
<path d="M537.800 251.600Q541.800 250 544 254.800L541.800 257Q540.500 253.500 536 253.300Z" fill="#1a2c86"/>
<path d="M485.200 309.300L489.800 296.600Q492 297 492.500 299Q495 299 495.200 301.300Q497 301.500 497 303.600Z" fill="#d9b487" stroke="#7a5a3a" stroke-width=".5"/><path d="M485.200 309.300L486.900 304.600L489.500 307.300Z" fill="#1a1a1a"/>
</svg>
<div class="t b" style="left:87px;top:225px;letter-spacing:.275px">Specification of Control Flow properties</div>
<div class="t" style="left:95.500px;top:243px;letter-spacing:-.03px">Specify properties of the selected Control Flow in the properties</div>
<div class="t" style="left:95.500px;top:257px;letter-spacing:-.045px">specification table. Choose the Expert or All options from the Properties</div>
<div class="t" style="left:95.500px;top:271px;letter-spacing:-.07px">drop-down list to see more properties.</div>
<!-- inner panel -->
<div class="a" style="left:79px;top:328px;width:485px;height:326px;border:1px solid #a6a6a6;box-shadow:1px 1px 0 #fff"></div>
<svg class="a" style="left:88px;top:335px" width="104" height="17" viewBox="88 335 104 17">
<rect x="90.500" y="337.500" width="11" height="11" fill="#fff" stroke="#555"/><path d="M91 338.500H101" stroke="#4466bb" stroke-width="1.500"/><path d="M92.500 342H95.500M97 342H100M92.500 344.500H95.500M97 344.500H100M92.500 347H95.500M97 347H100" stroke="#333" stroke-width="1.200" fill="none"/>
<g fill="#fff" stroke="#444" stroke-width="1"><path d="M114 340.500V348.500H118M114 343.500H117" fill="none"/><path d="M111.500 340.500V336.500H114.500L115.500 337.500H116.500V340.500Z"/><path d="M117.500 345V341.500H120.500L121.500 342.500H123V345Z"/><path d="M118.500 350V346.500H121.500L122.500 347.500H124V350Z"/></g>
<rect x="144.500" y="337.500" width="8" height="8" fill="#fff" stroke="#222" stroke-width="1.300"/><rect x="147.500" y="340.500" width="8" height="8" fill="#e8eef4" stroke="#222" stroke-width="1.300"/>
<g fill="none" stroke="#123a94" stroke-width="2.200"><path d="M179.600 343.500V341.800Q179.600 339.300 182.200 339.300H185"/><path d="M187.200 342.500V344.200Q187.200 346.700 184.600 346.700H181.800"/></g><path d="M184.300 336L188.600 339.300L184.300 342.400Z M182.500 343.600L178.200 346.700L182.500 350Z" fill="#123a94"/>
</svg>
<!-- tree -->
<div class="a" style="left:83px;top:356px;width:153px;height:294px;border:1px solid #828790;background:#fff"></div>
<div class="a" style="left:103px;top:357px;width:132px;height:16px;background:#3399ff"></div>
<div class="a" style="left:104px;top:358px;width:131px;height:280px;overflow:hidden">
<div class="t" style="left:0;top:0;color:#fff;letter-spacing:-.12px">Control Flow:not empty[Services::Query Products]</div>
<div class="t" style="left:18px;top:16px">Documentation/Hyperlinks</div>
</div>
<div class="t" style="left:122px;top:390px;letter-spacing:-.3px">Usage in Diagrams</div>
<div class="t" style="left:122px;top:406px">Conveyed Information</div>
<div class="t" style="left:122px;top:422px;letter-spacing:-.1px">Inner Elements</div>
<div class="t" style="left:122px;top:438px;letter-spacing:-.15px">Relations</div>
<div class="t" style="left:122px;top:454px">Tags</div>
<div class="t" style="left:122px;top:470px">Constraints</div>
<div class="t" style="left:122px;top:486px">Traceability</div>
<svg class="a" style="left:84px;top:357px" width="40" height="145" viewBox="84 357 40 145">
<defs><g id="tdoc"><rect x=".5" y=".5" width="12" height="13" fill="#fff" stroke="#8a8a8a"/><rect x="1.500" y="1.500" width="10" height="11" fill="none" stroke="#d4d4d4"/><path d="M2.700 2.600H7.700L10.300 5.200V11.400H2.700Z" fill="#fff" stroke="#2a2a2a" stroke-width="1.100"/><path d="M7.500 2.800V5.400H10" fill="none" stroke="#2a2a2a" stroke-width=".8"/><path d="M4.300 6H6M7.200 6H8.800M4.300 7.800H6M7.200 7.800H8.800M4.300 9.600H6M7.200 9.600H8.800" stroke="#444" stroke-width=".9"/></g></defs>
<path d="M87 361L93.500 368M94 364V368.500H89.500" fill="none" stroke="#3355cc" stroke-width="1.300"/><rect x="92.500" y="367.500" width="5.500" height="3.500" rx="1.500" fill="#e4e2a8" stroke="#666" stroke-width=".8"/>
<path d="M92.500 372V494M93 381.500H103M93 397.500H103M93 413.500H103M93 429.500H103M93 445.500H103M93 461.500H103M93 477.500H103M93 493.500H103" fill="none" stroke="#222" stroke-width="1" stroke-dasharray="1 1"/>
<rect x="88.500" y="377.500" width="8" height="8" fill="#fff" stroke="#8a8a8a"/><path d="M90.500 381.500H94.500M92.500 379.500V383.500" stroke="#222" fill="none"/>
<use href="#tdoc" x="104" y="374"/><use href="#tdoc" x="104" y="390"/><use href="#tdoc" x="104" y="406"/><use href="#tdoc" x="104" y="422"/><use href="#tdoc" x="104" y="438"/><use href="#tdoc" x="104" y="454"/><use href="#tdoc" x="104" y="470"/><use href="#tdoc" x="104" y="486"/>
</svg>
<div class="a" style="left:84px;top:633px;width:151px;height:16px;background:#f0f0f0"></div>
<div class="a" style="left:101px;top:633px;width:20px;height:16px;background:#cdcdcd"></div>
<svg class="a" style="left:88px;top:636px" width="8" height="9" viewBox="0 0 8 9"><path d="M6.300 1L2.300 4.500L6.300 8" fill="none" stroke="#505050" stroke-width="1.900"/></svg>
<svg class="a" style="left:223px;top:636px" width="8" height="9" viewBox="0 0 8 9"><path d="M1.700 1L5.700 4.500L1.700 8" fill="none" stroke="#505050" stroke-width="1.900"/></svg>
<!-- splitter grip -->
<div class="a" style="left:237px;top:484px;width:4px;height:14px;background:repeating-linear-gradient(to bottom,#c8c8c8 0,#c8c8c8 1px,transparent 1px,transparent 2px)"></div>
<!-- right pane -->
<div class="t" style="left:240px;top:335px;font-size:14px;font-weight:bold;line-height:18px;height:18px;letter-spacing:.1px">not empty</div>
<div class="a" style="left:240px;top:356px;width:324px;height:1px;background:#a6a6a6"></div>
<div class="a" style="left:243px;top:361px;width:22px;height:22px;background:#cde6f9;border:1px solid #66b0f5"></div>
<div class="a" style="left:297px;top:361px;width:22px;height:22px;background:#cde6f9;border:1px solid #66b0f5"></div>
<svg class="a" style="left:243px;top:361px" width="162" height="22" viewBox="243 361 162 22">
<g fill="#fff" stroke="#333" stroke-width="1"><rect x="248.500" y="366.500" width="4" height="4"/><rect x="248.500" y="373.500" width="4" height="4"/></g>
<path d="M249.500 368.500H251.500M250.500 367.500V369.500M249.500 375.500H251.500M250.500 374.500V376.500" stroke="#000" stroke-width="1" fill="none"/>
<path d="M254 366.500H258M254 368.500H259.500M254 370.500H260M254 373.500H260M254 375.500H259.500M254 377.500H258" stroke="#222" stroke-width="1" fill="none"/>
<text x="270" y="372" font-size="7.500" font-family="'Liberation Sans',sans-serif" fill="#222">A</text><text x="270" y="378.500" font-size="7.500" font-family="'Liberation Sans',sans-serif" fill="#222">Z</text>
<path d="M278.500 366V377.500M276.300 374.800L278.500 377.800L280.700 374.800Z" stroke="#222" stroke-width="1" stroke-dasharray="1.500 1 9" fill="#222"/>
<rect x="302.700" y="371.700" width="10.800" height="6" fill="#fff" stroke="#111" stroke-width="1.400"/><path d="M304.500 374.700H311.800" stroke="#111" stroke-width="1.100"/>
<g fill="none" stroke="#333" stroke-width="1"><rect x="332.500" y="367.500" width="6" height="6" fill="#fff"/><path d="M334 370.500H337M335.500 369V372"/><path d="M339 370.500H341" /><path d="M343.500 365V379" stroke-dasharray="1 1"/><path d="M341 369L343.500 365.500L346 369Z M341 375.500L343.500 379L346 375.500Z" stroke="#2a4fa8" fill="#fff"/></g>
<g fill="none" stroke="#333" stroke-width="1"><rect x="354.500" y="367.500" width="6" height="6" fill="#fff"/><path d="M356 370.500H359"/><path d="M361 370.500H363"/><path d="M366 364V380" stroke-dasharray="1 1"/><path d="M363.500 366.500L366 370L368.500 366.500Z M363.500 377.500L366 374L368.500 377.500Z" stroke="#2a4fa8" fill="#fff"/></g>
<text x="385.500" y="374" font-size="10" font-weight="bold" textLength="16" lengthAdjust="spacingAndGlyphs" font-family="'Liberation Sans',sans-serif" fill="#000">abc</text>
<path d="M389 377.500H391M393 377.500H395M397 377.500H399" stroke="#000" stroke-width="1.600"/>
</svg>
<div class="t" style="left:418px;top:364px">Properties:</div>
<div class="a" style="left:474px;top:361px;width:86px;height:20px;border:1px solid #adadad;background:#ececec"></div>
<div class="a" style="left:476px;top:363px;width:64px;height:16px;background:#fff"></div>
<div class="t" style="left:477px;top:364px">Standard</div>
<svg class="a" style="left:546px;top:369px" width="9" height="7" viewBox="0 0 9 7"><path d="M1 1L4.300 5L7.600 1" fill="none" stroke="#444" stroke-width="1.700"/></svg>
<!-- table -->
<div class="a" style="left:243px;top:383px;width:317px;height:203px;border:1px solid #9a9a9a;background:#f0f0f0"></div>
<div class="a" style="left:260px;top:401px;width:299px;height:180px;background:#fff"></div>
<div class="a" style="left:260px;top:417px;width:299px;height:1px;background:#e6e6e6"></div>
<div class="a" style="left:260px;top:435px;width:299px;height:1px;background:#e6e6e6"></div>
<div class="a" style="left:260px;top:453px;width:299px;height:1px;background:#e6e6e6"></div>
<div class="a" style="left:260px;top:472px;width:299px;height:1px;background:#e6e6e6"></div>
<div class="a" style="left:260px;top:491px;width:299px;height:1px;background:#e6e6e6"></div>
<div class="a" style="left:260px;top:536px;width:299px;height:1px;background:#e6e6e6"></div>
<div class="a" style="left:401px;top:401px;width:1px;height:180px;background:#e6e6e6"></div>
<div class="a" style="left:260px;top:492px;width:141px;height:44px;background:#3399ff"></div>
<svg class="a" style="left:248px;top:387px" width="10" height="10" viewBox="0 0 10 10"><rect x=".5" y=".5" width="8" height="8" fill="#fff" stroke="#555"/><path d="M2.500 4.500H6.500" stroke="#222"/></svg>
<div class="t b" style="left:264px;top:386px;color:#707070;letter-spacing:.09px">Control Flow</div>
<div class="t" style="left:261px;top:402px;letter-spacing:-.5px">Name</div>
<div class="t" style="left:261px;top:420px">Owner</div>
<div class="t" style="left:261px;top:438px">Applied Stereotype</div>
<div class="t" style="left:261px;top:456px;letter-spacing:-.3px">Source</div>
<div class="t" style="left:261px;top:474.500px;letter-spacing:.3px">Target</div>
<div class="t" style="left:261px;top:507px;color:#fff">Guard</div>
<div class="t" style="left:261px;top:552px">To Do</div>
<svg class="a" style="left:251px;top:510px" width="5" height="9" viewBox="0 0 5 9"><path d="M.3 .3L4.500 4.500L.3 8.700Z" fill="#000"/></svg>
<div class="t" style="left:402px;top:402px">not empty</div>
<div class="t" style="left:422.500px;top:420px">Create Keywords Pattern...</div>
<div class="t" style="left:422.500px;top:456px"><span style="letter-spacing:-.3px">CheckEmpty</span> <span style="color:#8c8c8c;letter-spacing:.12px">[Services::Q...</span></div>
<div class="t" style="left:422.500px;top:474.500px">Set Keywords Pattern <span style="color:#8c8c8c">[S...</span></div>
<div class="t" style="left:402px;top:493px">else</div>
<div class="a" style="left:422px;top:493px;width:1px;height:14px;background:#000"></div>
<svg class="a" style="left:402px;top:420px" width="18" height="70" viewBox="402 420 18 70">
<path d="M406.500 424.500H415.500Q417 424.500 417 426V429Q417 430.500 415.500 430.500H406.500Q405.500 430.500 405.500 429.500V428.500H404.500V426.500H405.500V425.500Q405.500 424.500 406.500 424.500Z" fill="url(#yg)" stroke="#444" stroke-width=".9"/><circle cx="416" cy="430.500" r="2" fill="#fff" stroke="#333" stroke-width=".8"/>
<path d="M403.500 464L410.500 460.500L417.500 464L410.500 467.500Z" fill="url(#gg)" stroke="#777" stroke-width=".8"/><path d="M410.500 455.500V460M409 458.500L410.500 460.200L412 458.500M406 466.500L403.500 470M403.500 467.800V470.200H406M415 466.500L417.500 470M417.500 467.800V470.200H415" fill="none" stroke="#3366ee" stroke-width="1"/>
<rect x="405" y="478.500" width="12" height="7" rx="3.500" fill="url(#yg)" stroke="#444"/>
</svg>
<div class="a" style="left:543px;top:494px;width:13px;height:13px;border:1px solid #adadad;background:#f0f0f0"></div>
<div class="a" style="left:546px;top:502px;width:7px;height:1px;background:repeating-linear-gradient(to right,#000 0,#000 1px,transparent 1px,transparent 3px)"></div>
<div class="a" style="left:544px;top:516px;width:11px;height:11px;border:1px solid #adadad;background:#f0f0f0"></div>
<svg class="a" style="left:548px;top:518px" width="5" height="8" viewBox="0 0 5 8"><path d="M.3 .3L4.300 3.800L.3 7.300Z" fill="#000"/></svg>
<!-- description -->
<div class="a" style="left:243px;top:590px;width:317px;height:60px;border:1px solid #a0a0a0"></div>
<div class="t b" style="left:245px;top:592px;letter-spacing:.2px">Guard</div>
<div class="t" style="left:245px;top:606px;letter-spacing:-.06px">A ValueSpecification that is evaluated to determine if a token can</div>
<div class="t" style="left:245px;top:620px;letter-spacing:.065px">traverse the ActivityEdge. If an ActivityEdge has no guard, then</div>
<div class="t" style="left:245px;top:634px">there is no restriction on tokens traversing the edge.</div>
<!-- buttons -->
<div class="a" style="left:410px;top:661px;width:71px;height:21px;border:1px solid #3c9af0;background:linear-gradient(to bottom,#eaf4fd 0,#e3effb 50%,#d6e8fa 51%,#d2e5f9 100%);box-shadow:inset 0 0 0 1px #e9f4fe"></div>
<div class="t" style="left:409px;top:664px;width:71px;text-align:center">Close</div>
<div class="a" style="left:493px;top:661px;width:71px;height:21px;border:1px solid #acacac;background:linear-gradient(to bottom,#f2f2f2 0,#efefef 50%,#e4e4e4 51%,#dfdfdf 100%)"></div>
<div class="t" style="left:492px;top:664px;width:71px;text-align:center">Help</div>
<!-- cursor -->
<svg class="a" style="left:475px;top:675px" width="13" height="20" viewBox="0 0 13 20"><path d="M.5 .7V16.500L4.200 13L6.800 19L9 18L6.500 12.200H11.500Z" fill="#fff" stroke="#000" stroke-width="1"/></svg>
</body>
</html>
